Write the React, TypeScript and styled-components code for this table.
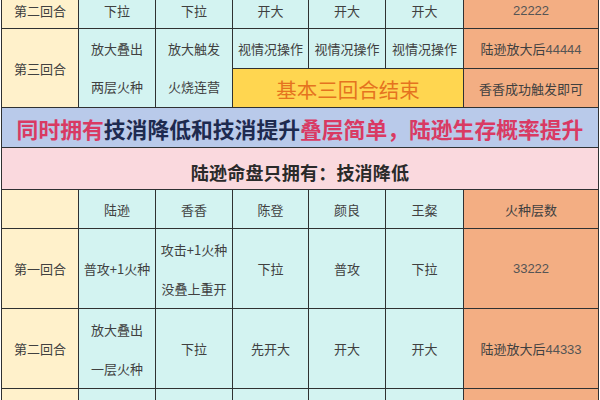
import React from "react";
import styled, { createGlobalStyle } from "styled-components";

const GlobalStyle = createGlobalStyle`
  html, body {
    margin: 0;
    padding: 0;
    background: #ffffff;
    overflow: hidden;
  }
  body {
    font-family: "Noto Sans CJK SC", "Noto Sans", sans-serif;
  }
`;

const palette = {
  cream: "#fff1cb",
  cyan: "#d3f3f1",
  orange: "#f3ae83",
  yellow: "#ffd650",
  banner: "#b9caea",
  pink: "#fad9de",
  line: "#2f3132",
};

type Tone = keyof typeof palette;

const Viewport = styled.div`
  width: 600px;
  height: 400px;
  overflow: hidden;
`;

const Table = styled.div`
  display: grid;
  grid-template-columns: 76px 76px 76px 75px 76px 77px 134px;
  grid-template-rows: 36px 39px 38px 39px 41px 38px 79px 79px 60px;
  gap: 1px;
  background: ${palette.line};
  border: 1px solid ${palette.line};
  width: max-content;
  margin: -9px 0 0 1px;
`;

const Cell = styled.div<{ $bg: Tone; $span?: number; $rows?: number }>`
  grid-column: span ${(p) => p.$span ?? 1};
  grid-row: span ${(p) => p.$rows ?? 1};
  background: ${(p) => palette[p.$bg]};
  display: flex;
  flex-direction: column;
  align-items: center;
  justify-content: center;
  color: #404040;
  font-size: 13px;
  white-space: nowrap;
  overflow: hidden;
`;

const Line = styled.div<{ $h?: number }>`
  line-height: ${(p) => p.$h ?? 20}px;
`;

const Num = styled.span`
  font-family: "Liberation Sans", "DejaVu Sans", sans-serif;
  color: #555;
  font-size: 13px;
`;

const Banner = styled.div`
  grid-column: span 7;
  background: ${palette.banner};
  display: flex;
  align-items: center;
  justify-content: center;
  font-size: 21.8px;
  font-weight: 700;
  white-space: nowrap;
  padding-top: 1px;
`;

const Ink = styled.span<{ $tone: "red" | "navy" }>`
  color: ${(p) => (p.$tone === "red" ? "#d93a63" : "#1e2a4f")};
`;

const Title = styled.div`
  grid-column: span 7;
  background: ${palette.pink};
  display: flex;
  align-items: center;
  justify-content: center;
  font-size: 18px;
  font-weight: 700;
  color: #2a2a2a;
  padding-top: 6px;
  letter-spacing: 0.2px;
`;

const EndNote = styled.span`
  color: #e5731f;
  font-size: 20.5px;
  padding-top: 2px;
`;

type Row = { round: string; cells: string[][]; fire: React.ReactNode };

const lower: Row[] = [
  {
    round: "第一回合",
    cells: [["普攻+1火种"], ["攻击+1火种", "没叠上重开"], ["下拉"], ["普攻"], ["下拉"]],
    fire: <Num>33222</Num>,
  },
  {
    round: "第二回合",
    cells: [["放大叠出", "一层火种"], ["下拉"], ["先开大"], ["开大"], ["开大"]],
    fire: (
      <span>
        陆逊放大后<Num>44333</Num>
      </span>
    ),
  },
];

export default function App() {
  return (
    <>
      <GlobalStyle />
      <Viewport>
        <Table>
          <Cell $bg="cream">第二回合</Cell>
          {["下拉", "下拉", "开大", "开大", "开大"].map((t, i) => (
            <Cell key={i} $bg="cyan">
              {t}
            </Cell>
          ))}
          <Cell $bg="orange">
            <Num>22222</Num>
          </Cell>

          <Cell $bg="cream" $rows={2}>
            第三回合
          </Cell>
          <Cell $bg="cyan" $rows={2}>
            <Line $h={38}>放大叠出</Line>
            <Line $h={38}>两层火种</Line>
          </Cell>
          <Cell $bg="cyan" $rows={2}>
            <Line $h={38}>放大触发</Line>
            <Line $h={38}>火烧连营</Line>
          </Cell>
          {[0, 1, 2].map((i) => (
            <Cell key={i} $bg="cyan">
              视情况操作
            </Cell>
          ))}
          <Cell $bg="orange">
            <span>
              陆逊放大后<Num>44444</Num>
            </span>
          </Cell>
          <Cell $bg="yellow" $span={3}>
            <EndNote>基本三回合结束</EndNote>
          </Cell>
          <Cell $bg="orange">香香成功触发即可</Cell>

          <Banner>
            <Ink $tone="red">同时拥有</Ink>
            <Ink $tone="navy">技消降低和技消提升</Ink>
            <Ink $tone="red">叠层简单，陆逊生存概率提升</Ink>
          </Banner>

          <Title>陆逊命盘只拥有：技消降低</Title>

          <Cell $bg="cream" />
          {["陆逊", "香香", "陈登", "颜良", "王粲"].map((t) => (
            <Cell key={t} $bg="cyan">
              {t}
            </Cell>
          ))}
          <Cell $bg="orange">火种层数</Cell>

          {lower.map((r) => (
            <React.Fragment key={r.round}>
              <Cell $bg="cream">{r.round}</Cell>
              {r.cells.map((lines, i) => (
                <Cell key={i} $bg="cyan">
                  {lines.map((l) => (
                    <Line key={l} $h={lines.length > 1 ? 39 : 20}>
                      {l}
                    </Line>
                  ))}
                </Cell>
              ))}
              <Cell $bg="orange">{r.fire}</Cell>
            </React.Fragment>
          ))}

          <Cell $bg="cream" />
          {[0, 1, 2, 3, 4].map((i) => (
            <Cell key={i} $bg="cyan" />
          ))}
          <Cell $bg="orange" />
        </Table>
      </Viewport>
    </>
  );
}
